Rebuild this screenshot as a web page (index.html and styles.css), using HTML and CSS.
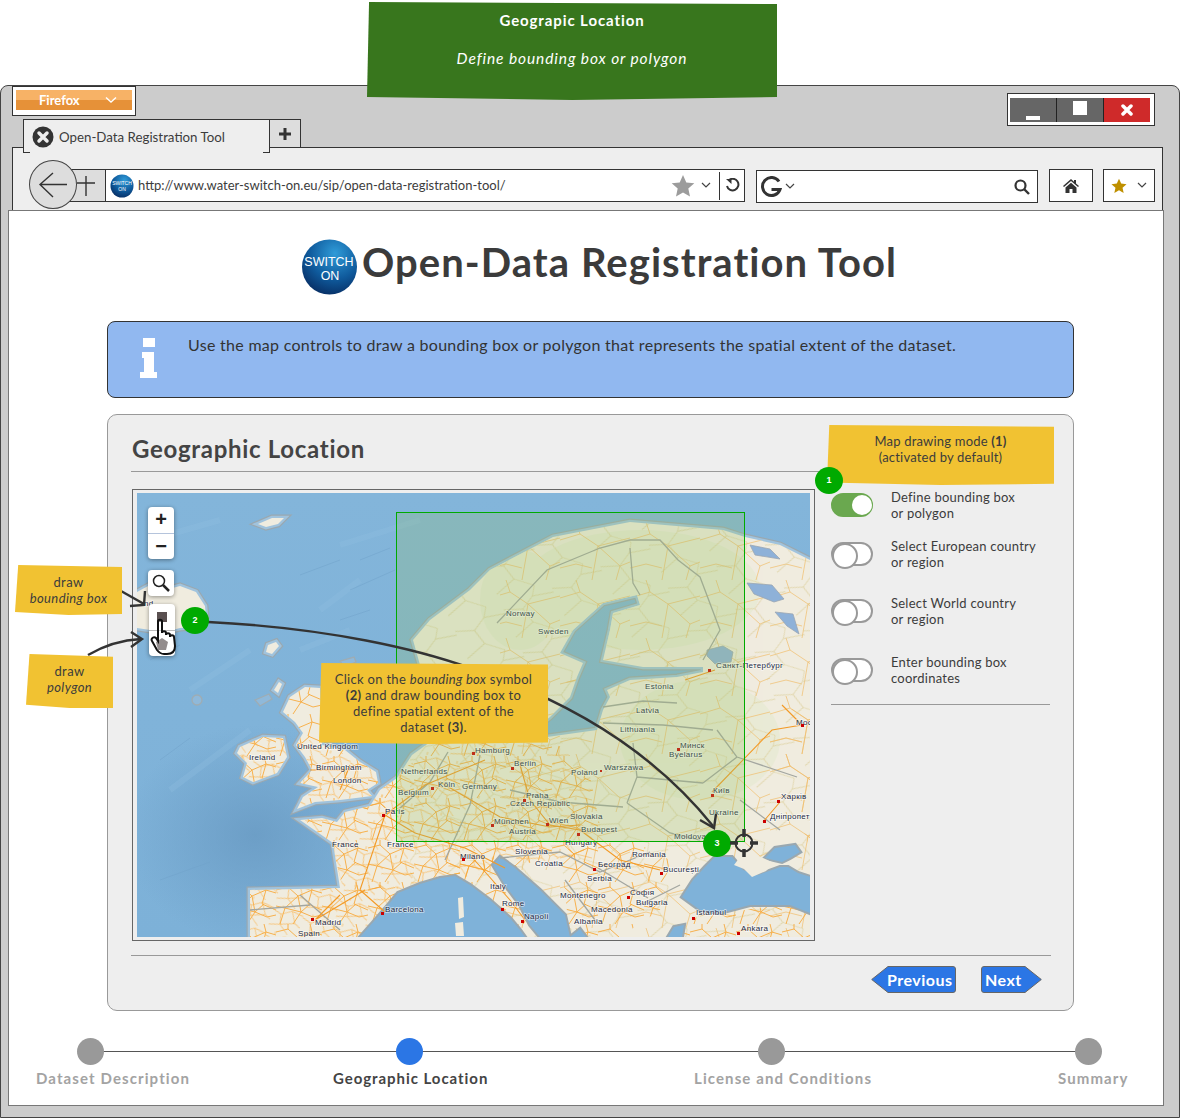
FILE: index.html
```html
<!DOCTYPE html>
<html lang="en">
<head>
<meta charset="utf-8">
<title>Open-Data Registration Tool</title>
<link rel="stylesheet" href="styles.css">
</head>
<body>
<div class="canvas">
  <div class="window">
    <div class="top-row">
      <div class="top-left">
        <div class="ff-box"><div class="ff-btn"><span>Firefox</span><svg class="ff-chev" width="12" height="8" viewBox="0 0 12 8"><path d="M1 1.500 6 6l5-4.500" /></svg></div></div>
        <div class="tabs">
          <div class="tab">
            <svg width="22" height="22" viewBox="0 0 22 22"><circle cx="11" cy="11" r="10.500" fill="#333"/><path d="M7 7l8 8M15 7l-8 8" stroke="#eee" stroke-width="3.500" stroke-linecap="round"/></svg>
            <span>Open-Data Registration Tool</span>
          </div>
          <div class="tab-add"><svg width="14" height="14" viewBox="0 0 14 14"><path d="M7 1v12M1 7h12" stroke="#333" stroke-width="3"/></svg></div>
        </div>
      </div>
      <div class="winctl">
        <div class="wc wc-min"><i></i></div>
        <div class="wc wc-max"><i></i></div>
        <div class="wc wc-close"><svg width="12" height="12" viewBox="0 0 12 12"><path d="M2 2l8 8M10 2l-8 8" stroke="#fff" stroke-width="3.500" stroke-linecap="round"/></svg></div>
      </div>
    </div>

    <div class="panel">
      <div class="toolbar">
        <div class="nav">
          <svg class="fwd" width="20" height="22" viewBox="0 0 20 22"><path d="M10 1v20M1 8h18" stroke="#333" stroke-width="1.400"/></svg>
          <div class="back"><svg width="30" height="26" viewBox="0 0 30 26"><path d="M2 12.500h27M15 1 2 12.500 15 25" fill="none" stroke="#333" stroke-width="1.400"/></svg></div>
        </div>
        <div class="urlbar">
          <svg class="tiny-logo" width="24" height="24" viewBox="0 0 24 24"><circle cx="12" cy="12" r="11.500" fill="url(#ball)"/><text x="12" y="11" class="tl-t">SWITCH</text><text x="12" y="17" class="tl-t">ON</text></svg>
          <span class="url">http://www.water-switch-on.eu/sip/open-data-registration-tool/</span>
          <svg class="star" width="24" height="24" viewBox="0 0 24 24"><path d="M12 1l3.300 7.400 8 .8-6 5.400 1.700 7.900L12 18.400 5 22.500l1.700-7.900-6-5.400 8-.8Z" fill="#9c9c9c"/></svg>
          <svg class="chev" width="10" height="7" viewBox="0 0 10 7"><path d="M1 1l4 4 4-4"/></svg>
          <div class="reload"><svg width="15" height="15" viewBox="0 0 15 15"><path d="M3.500 2.500A5.800 5.800 0 1 1 2 8" fill="none" stroke="#333" stroke-width="2"/><path d="M1 1h5.500v5z" fill="#333"/></svg></div>
        </div>
        <div class="search">
          <svg width="22" height="22" viewBox="0 0 22 22"><path d="M19 5.500A9 9 0 1 0 20 13.500H11.500" fill="none" stroke="#333" stroke-width="3"/></svg>
          <svg class="chev" width="10" height="7" viewBox="0 0 10 7"><path d="M1 1l4 4 4-4"/></svg>
          <svg class="loupe" width="16" height="16" viewBox="0 0 16 16"><circle cx="6.500" cy="6.500" r="5" fill="none" stroke="#333" stroke-width="2.200"/><path d="M10 10l5 5" stroke="#333" stroke-width="2.400"/></svg>
        </div>
        <div class="iconbox home"><svg width="16" height="14" viewBox="0 0 16 14"><path d="M8 0 0 7l1 1 7-6 7 6 1-1-3-2.600V1h-2v1.700ZM2.500 8.500 8 3.800l5.500 4.700V14H9.500V10h-3v4h-4Z" fill="#333"/></svg></div>
        <div class="iconbox fav"><svg width="16" height="16" viewBox="0 0 24 24"><path d="M12 1l3.300 7.400 8 .8-6 5.400 1.700 7.900L12 18.400 5 22.500l1.700-7.900-6-5.400 8-.8Z" fill="#bf9000"/></svg><svg class="chev" width="10" height="7" viewBox="0 0 10 7"><path d="M1 1l4 4 4-4"/></svg></div>
      </div>
    </div>

    <div class="page">
      <div class="title-row">
        <svg class="logo" width="58" height="58" viewBox="0 0 58 58">
          <defs><radialGradient id="ball" cx=".6" cy=".25" r=".85"><stop offset="0" stop-color="#2f9bd8"/><stop offset=".55" stop-color="#0f5a9c"/><stop offset="1" stop-color="#06265a"/></radialGradient></defs>
          <circle cx="28.500" cy="29" r="27.500" fill="url(#ball)"/>
          <text x="28" y="28" class="logo-t">SWITCH</text><text x="29" y="42" class="logo-t">ON</text>
        </svg>
        <h1>Open-Data Registration Tool</h1>
      </div>

      <div class="alert">
        <svg class="alert-i" width="18" height="40" viewBox="0 0 18 40"><path d="M3 0h12v9H3ZM2 14h12v20h3v6H0v-6h4v-14H2Z" fill="#fff"/></svg>
        <p>Use the map controls to draw a bounding box or polygon that represents the spatial extent of the dataset.</p>
      </div>

      <section class="card">
        <div class="card-main">
          <div class="col-left">
            <h2>Geographic Location</h2>
            <div class="map-frame">
              <svg class="map" width="673" height="444" viewBox="137 493 673 444">
                <defs>
                  <linearGradient id="sea" x1="0" y1="0" x2="0" y2="1"><stop offset="0" stop-color="#83b5da"/><stop offset="1" stop-color="#7db1d8"/></linearGradient>
                  <radialGradient id="deep"><stop offset="0" stop-color="#6596bf" stop-opacity=".7"/><stop offset="1" stop-color="#6596bf" stop-opacity="0"/></radialGradient>
                  <pattern id="dense" width="46" height="42" patternUnits="userSpaceOnUse"><path d="M0 8 12 5l10 9 14-6 10 3M4 42 9 26 22 14l3 16-8 12M36 8l-4 14 14 6M0 24l9 2 16 4 9-8M25 30l12 5 9-2M34 0l2 8M12 0l0 5" fill="none" stroke="#f7a93c" stroke-width=".9"/></pattern>
                  <pattern id="dense2" width="31" height="27" patternUnits="userSpaceOnUse" patternTransform="rotate(17)"><path d="M0 6 9 9l10-6 12 2M9 9l2 10 10 8M11 19 0 22M11 19l14-5 6 3M19 3l6 11M9 0v3" fill="none" stroke="#f9b655" stroke-width=".7"/></pattern>
                  <pattern id="sparse" width="70" height="58" patternUnits="userSpaceOnUse"><path d="M0 18 20 12l18 12 32-8M20 12 16 0M38 24l-6 34M38 24l22 20 10-4M0 46l16-4 16 4M60 44l-4 14" fill="none" stroke="#f0bd6a" stroke-width=".7"/></pattern>
                  <pattern id="sparse2" width="53" height="47" patternUnits="userSpaceOnUse" patternTransform="rotate(-24)"><path d="M0 10 18 17l14-8 21 5M18 17l4 16 16 14M22 33 0 40M38 0l-6 9" fill="none" stroke="#d9c98f" stroke-width=".6"/></pattern>
                  <path id="iceland" d="M137 592 150 585l15 5 15-4 16 6 9 14 1 11-11 10-15 1-15 4-15-2-13-2Z"/>
                  <path id="ireland" d="M240 747l23-10 20 1 4 19-10 16-24 9-10-5 4-14-10-10Z"/>
                  <path id="britain" d="M283 712l7-15 15-10 15 1 2 57 23 5 15 12 16 10 2 11-11 7 5 6-32 4-25 2-18 7 6-12 15-10-18-4 12-13-7-13-9-12 7-12-8-11Z"/>
                  <path id="main" d="M300 820 322 818 337 822 345 812 370 806 380 790 397 778 412 755 430 742 470 742 547 737 597 730 603 710 610 697 607 690 630 680 677 677 703 672 703 667 643 667 603 660 610 630 613 613 640 605 637 595 603 603 573 630 560 653 583 663 577 677 570 697 550 717 540 725 500 700 450 690 420 665 413 640 430 620 470 590 490 570 553 537 630 522 723 530 745 537 780 545 810 560V937H250V890L340 888 333 843Z"/>
                  <path id="skerry" d="M258 524l14-6 12 0-6 6-12 3Z"/>
                  <path id="faroe" d="M268 645l8-3 3 4-7 8-6-2Z"/>
                  <path id="hebrid" d="M274 690l5-8 3 2-4 9Z"/>
                  <clipPath id="landclip"><use href="#iceland"/><use href="#ireland"/><use href="#britain"/><use href="#main"/></clipPath>
                  <g id="land-shapes">
                    <use href="#iceland"/><use href="#ireland"/><use href="#britain"/><use href="#main"/><use href="#skerry"/><use href="#faroe"/><use href="#hebrid"/>
                  </g>
                  <g id="sea-shapes">
                    <path d="M360 937l15-17 13-15 10-12 22-9 20-6 15-2 15 9 20 15 20 18 10 12 5 7Z"/>
                    <path d="M500 857l15 11 25 22 25 25 5 22h-30l-10-12-10-20-15-20-12-20Z"/>
                    <path d="M570 937l10-8 6 8Z"/>
                    <path d="M682 897l11-17 12-13 10-10h17l11 13 15 5 22-8 8 0 10 6 22 7v37l-30-12h-40l-30 8-20-3Z"/>
                    <path d="M765 858l10-10 20-3 5 7-10 6-8 4Z"/>
                    <path d="M668 937l6-10 10-2-2 12Z"/>
                  </g>
                </defs>
                <rect x="137" y="493" width="673" height="444" fill="url(#sea)"/>
                <ellipse cx="255" cy="835" rx="130" ry="110" fill="url(#deep)"/>
                <path d="M150 540l70-20M340 545l80-25M320 610l40-30M170 790l80-60M300 650l50-20M190 690l60-40" class="ridge"/>
                <path d="M360 560l30-12M350 590l45-20M340 620l30-10M300 575l40-15M160 760l30-22M160 880l50-18M150 660l30-15" class="ridge-thin"/>
                <circle cx="197" cy="700" r="5" class="islet"/>
                <path d="M255 700l14-6 3 5-12 7Z" class="islet"/>
                <path d="M340 661l14-4 2 5-12 5Z" class="islet"/>
                <use href="#land-shapes" class="coast"/>
                <use href="#land-shapes" class="coast-in"/>
                <use href="#land-shapes" class="landfill"/>
                <g clip-path="url(#landclip)">
                  <g class="wash">
                    <ellipse cx="640" cy="590" rx="120" ry="60"/>
                    <ellipse cx="700" cy="740" rx="80" ry="60"/>
                    <ellipse cx="520" cy="600" rx="40" ry="50"/>
                  </g>
                  <rect x="500" y="520" width="310" height="420" fill="url(#sparse)"/>
                  <rect x="410" y="520" width="400" height="420" fill="url(#sparse2)"/>
                  <path d="M300 815l40-10 28-6 28-24 44-34 60 0 60 5 30 30 10 50-20 30-60 8-40 10-40 8-40 7h-57l-10-40Z" fill="url(#dense)"/>
                  <path d="M300 815l40-10 28-6 28-24 44-34 60 0 60 5 30 30 10 50-20 30-60 8-40 10-40 8-40 7h-57l-10-40Z" fill="url(#dense2)"/>
                  <rect x="245" y="885" width="150" height="52" fill="url(#dense)"/>
                  <rect x="245" y="885" width="150" height="52" fill="url(#dense2)"/>
                  <rect x="230" y="680" width="155" height="130" fill="url(#dense)"/>
                  <rect x="230" y="740" width="155" height="70" fill="url(#dense2)"/>
                  <path d="M450 860l60-5 40 70-30 12-30-20-40-35Z" fill="url(#dense)"/>
                  <path d="M560 850l70-10 40 20-10 50-40 27h-50Z" fill="url(#dense)"/>
                  <path d="M680 920l130-20v37H670Z" fill="url(#dense)"/>
                  <path d="M560 660l45-5-5 20-30 20ZM810 700l-20 10-30 30 30 50 20 60Z" fill="url(#sparse)"/>
                </g>
                <use href="#sea-shapes" class="sea-coast"/>
                <use href="#sea-shapes" class="sea-fill"/>
                <path d="M740 857l12-4 22 10-8 8-14 6-8-8-10-4Z" class="landfill"/>
                <path d="M458 898l5-1 1 20-5 2ZM455 923l8-1 1 14-8 0Z" class="landfill"/>
                <path d="M707 650l16-4 10 6-2 10-16 2-8-8ZM747 583l25 2 12 14-10 3-20-8ZM775 612l18 2 6 20-12-8ZM750 545l20 4 10 10-25-4Z" class="lake"/>
                <path d="M497 623l50-53 53-22 30-8 30 0 18 20 22 17 20 53-17 30M630 548l3 35 7 12M603 707l40-6 34 2M603 723l60 2 50 5M717 730l20 27-34 26M637 777l66 6M633 743l4 34-10 26M510 790l50 12 63 5M627 803l43 30 30 7M448 752l-18 30-30 26M480 755l-10 50-25 55M500 858l60-6 40 20 50-20M598 868l50 30M565 880l30 40M640 905l40-20M300 895l40 35M250 910l60-5M740 800l40 30M737 757l60 20" class="border"/>
                <path d="M385 815l30 18 50 15 40 20M385 815l40-30 60-25M385 815l-15 45-10 30M440 782l60 35 50 10 30-2M520 765l10 35 20 25 30 5M580 830l40 30 40 10M360 890l25 22M315 920l25-25M315 920l50-30M310 770l40 0M340 790l10-25M715 670l-30 10M802 725l-30 5-60 62M802 725l-20-20M780 802l-17 20M470 855l40 45 15 20" class="road"/>
                <g class="labels">
                  <text x="144" y="606">nd</text>
                  <text x="506" y="616">Norway</text><text x="538" y="634">Sweden</text>
                  <text x="716" y="668">Санкт-Петербург</text>
                  <text x="645" y="689">Estonia</text><text x="636" y="713">Latvia</text><text x="620" y="732">Lithuania</text>
                  <text x="680" y="748">Минск</text><text x="669" y="757">Byelarus</text>
                  <text x="475" y="753">Hamburg</text><text x="514" y="766">Berlin</text>
                  <text x="571" y="775">Poland</text><text x="604" y="770">Warszawa</text>
                  <text x="713" y="793">Київ</text><text x="781" y="799">Харків</text><text x="770" y="819">Дніпропетровськ</text>
                  <text x="709" y="815">Ukraine</text><text x="674" y="839">Moldova</text><text x="796" y="725">Москва</text>
                  <text x="401" y="774">Netherlands</text><text x="438" y="787">Köln</text><text x="398" y="795">Belgium</text><text x="462" y="789">Germany</text>
                  <text x="526" y="798">Praha</text><text x="510" y="806">Czech Republic</text><text x="494" y="824">München</text>
                  <text x="509" y="834">Austria</text><text x="549" y="823">Wien</text><text x="570" y="819">Slovakia</text>
                  <text x="581" y="832">Budapest</text><text x="565" y="845">Hungary</text><text x="515" y="854">Slovenia</text>
                  <text x="535" y="866">Croatia</text><text x="632" y="857">Romania</text><text x="663" y="872">București</text>
                  <text x="598" y="867">Београд</text><text x="587" y="881">Serbia</text><text x="560" y="898">Montenegro</text>
                  <text x="630" y="895">Софія</text><text x="636" y="905">Bulgaria</text><text x="490" y="889">Italy</text>
                  <text x="502" y="906">Rome</text><text x="524" y="919">Napoli</text><text x="591" y="912">Macedonia</text>
                  <text x="574" y="924">Albania</text><text x="696" y="915">Istanbul</text><text x="741" y="931">Ankara</text>
                  <text x="297" y="749">United Kingdom</text><text x="249" y="760">Ireland</text><text x="316" y="770">Birmingham</text>
                  <text x="333" y="783">London</text><text x="385" y="814">Paris</text><text x="332" y="847">France</text><text x="387" y="847">France</text>
                  <text x="385" y="912">Barcelona</text><text x="315" y="925">Madrid</text><text x="298" y="936">Spain</text><text x="460" y="859">Milano</text>
                </g>
                <g class="cities">
                  <rect x="382" y="814" width="3" height="3"/><rect x="381" y="912" width="3" height="3"/><rect x="311" y="918" width="3" height="3"/>
                  <rect x="431" y="787" width="3" height="3"/><rect x="801" y="724" width="3" height="3"/><rect x="708" y="669" width="3" height="3"/><rect x="677" y="748" width="3" height="3"/>
                  <rect x="511" y="767" width="3" height="3"/><rect x="600" y="770" width="2" height="2"/><rect x="711" y="794" width="3" height="3"/>
                  <rect x="777" y="800" width="3" height="3"/><rect x="763" y="820" width="3" height="3"/><rect x="523" y="799" width="3" height="3"/><rect x="546" y="823" width="3" height="3"/>
                  <rect x="577" y="833" width="3" height="3"/><rect x="660" y="872" width="3" height="3"/><rect x="593" y="868" width="3" height="3"/><rect x="627" y="896" width="3" height="3"/>
                  <rect x="521" y="920" width="3" height="3"/><rect x="692" y="917" width="3" height="3"/><rect x="737" y="932" width="3" height="3"/><rect x="472" y="752" width="3" height="3"/><rect x="491" y="824" width="3" height="3"/>
                  <rect x="462" y="858" width="3" height="3"/><rect x="501" y="908" width="3" height="3"/>
                </g>
                <rect x="396.500" y="512.500" width="348" height="329" class="bbox"/>
              </svg>
              <div class="ctl ctl-zoom"><b>+</b><b>−</b></div>
              <div class="ctl ctl-search"><svg width="20" height="20" viewBox="0 0 20 20"><circle cx="8" cy="8" r="5.500" fill="none" stroke="#222" stroke-width="1.500"/><path d="M12 12l6 6" stroke="#222" stroke-width="2.500"/></svg></div>
              <div class="ctl ctl-draw">
                <div class="ctl-cell"><i class="sq"></i></div>
                <div class="ctl-cell"><svg width="12" height="12" viewBox="0 0 12 12"><path d="M6 0l6 4-2 8H2L0 4Z" fill="#5a5050"/></svg></div>
              </div>
            </div>
          </div>
          <aside class="col-right">
            <div class="sticky sticky-mode">Map drawing mode <b>(1)</b><br>(activated by default)</div>
            <ul class="toggles">
              <li class="t1"><span class="sw on"></span><span>Define bounding box<br>or polygon</span></li>
              <li class="t2"><span class="sw"></span><span>Select European country<br>or region</span></li>
              <li class="t3"><span class="sw"></span><span>Select World country<br>or region</span></li>
              <li class="t4"><span class="sw"></span><span>Enter bounding box<br>coordinates</span></li>
            </ul>
          </aside>
        </div>
        <div class="card-foot">
          <a class="btn btn-prev"><svg width="85" height="27" viewBox="0 0 85 27"><path d="M17 .5H82a2.500 2.500 0 0 1 2.500 2.500v21a2.500 2.500 0 0 1-2.500 2.500H17L.7 13.500Z" fill="#2b76e5" stroke="#666"/></svg><span>Previous</span></a>
          <a class="btn btn-next"><svg width="61" height="27" viewBox="0 0 61 27"><path d="M44 .5H3A2.500 2.500 0 0 0 .5 3v21A2.500 2.500 0 0 0 3 26.500H44l16.300-13Z" fill="#2b76e5" stroke="#666"/></svg><span>Next</span></a>
        </div>
      </section>

      <div class="stepper">
        <div class="dots"><i></i><i class="cur"></i><i></i><i></i></div>
        <div class="labels-row"><span>Dataset Description</span><span class="cur">Geographic Location</span><span>License and Conditions</span><span>Summary</span></div>
      </div>
    </div>
  </div>

  <svg class="overlay" width="1180" height="1118" viewBox="0 0 1180 1118">
    <path d="M208 622C330 628 420 650 470 668 580 704 660 760 713 826" class="arrow"/>
    <path d="M700 820l14 8 2-14" class="arrow"/>
    <path d="M121 591 144 604" class="arrow"/>
    <path d="M130 606l14-1 1-14" class="arrow"/>
    <path d="M88 655C105 645 122 640 141 639" class="arrow"/>
    <path d="M131 632l11 7-11 8" class="arrow"/>
  </svg>

  <div class="banner"><b>Geograpic Location</b><em>Define bounding box or polygon</em></div>
  <div class="sticky sticky-a"><span>draw</span><em>bounding box</em></div>
  <div class="sticky sticky-b"><span>draw</span><em>polygon</em></div>
  <div class="sticky sticky-c">Click on the <em>bounding box</em> symbol<br><b>(2)</b> and draw bounding box to<br>define spatial extent of the<br>dataset <b>(3)</b>.</div>
  <div class="badge b1">1</div>
  <div class="badge b2">2</div>
  <div class="badge b3">3</div>
  <svg class="crosshair" width="28" height="28" viewBox="0 0 28 28"><circle cx="14" cy="14" r="8.500" fill="none" stroke="#333" stroke-width="2"/><path d="M14 0v8M14 20v8M0 14h8M20 14h8" stroke="#333" stroke-width="3.500"/></svg>
  <svg class="hand" width="30" height="38" viewBox="0 0 30 38"><path d="M8 3.500C8 1 12 1 12 3.500V15c0-2.500 4-2.500 4 0v2c0-2.500 4-2.500 4 0v2c0-2.500 4-2.500 4 0l1 9c0 5-3 8-8 8h-3c-3 0-5-1.500-7-4L2 23c-1.500-2.500 2-5 4-3l2 3Z" fill="#fff" fill-opacity=".35" stroke="#111" stroke-width="2"/></svg>
</div>
</body>
</html>
```
FILE: styles.css
```css
* { box-sizing: border-box; }
html, body { margin: 0; padding: 0; background: #fff; }
body { font-family: Lato, "Open Sans", sans-serif; color: #3c3c3c; }
.canvas { position: relative; width: 1180px; height: 1118px; overflow: hidden; }

/* window */
.window { position: absolute; left: 0; top: 85px; width: 1180px; height: 1033px; background: #ccc; border: 1.500px solid #444; border-radius: 8px 8px 0 0; }
.top-row { display: flex; justify-content: space-between; height: 61px; padding: 0 24px 0 11px; }
.ff-box { width: 124px; height: 30px; background: #fff; border: 1px solid #333; padding: 3px 3px; }
.ff-btn { height: 20px; background: linear-gradient(#f7b266 50%, #e69138 50%); color: #fff; display: flex; align-items: center; justify-content: space-between; padding: 0 15px 0 23px; font-size: 13px; font-weight: 700; }
.ff-chev { fill: none; stroke: #fff; stroke-width: 1.500; }
.tabs { display: flex; margin-left: 11px; margin-top: 3px; height: 28px; position: relative; z-index: 2; }
.tab { width: 247px; height: 34px; background: #eee; border: 1px solid #333; border-bottom: 0; display: flex; align-items: center; gap: 5px; padding: 0 0 0 8px; font-size: 13.300px; position: relative; }
.tab::before, .tab::after { content: ""; position: absolute; bottom: 0; width: 7px; height: 1px; background: #333; }
.tab::before { left: -1px; }
.tab::after { right: -1px; }
.tab-add { width: 32px; height: 28px; margin-left: -1px; background: #ddd; border: 1px solid #333; border-bottom: 0; display: flex; align-items: center; justify-content: center; }
.winctl { display: flex; width: 148px; height: 33px; margin-top: 7px; background: #fff; border: 1px solid #333; padding: 4px 4px 3px 2px; }
.wc { flex: 1; display: flex; align-items: center; justify-content: center; background: #666; }
.wc + .wc { border-left: 1px solid #222; }
.wc-min i { width: 14px; height: 4px; background: #fff; margin-top: 15px; }
.wc-max i { width: 14px; height: 14px; background: #fff; margin-top: -5px; }
.wc-close { background: #cf2a2a; }

.panel { width: 1151px; height: 70px; margin-left: 11px; background: #eee; border: 1px solid #333; padding-top: 21px; }
.toolbar { display: flex; height: 33px; padding-left: 47px; }
.nav { width: 45px; height: 33px; background: #ddd; border: 1px solid #333; border-left: 0; border-right: 0; position: relative; display: flex; align-items: center; justify-content: flex-end; padding-right: 9px; }
.back { position: absolute; left: -31px; top: -10px; width: 48px; height: 49px; border-radius: 50%; background: #ddd; border: 1px solid #444; display: flex; align-items: center; justify-content: center; z-index: 2; }
.urlbar { width: 640px; background: #fff; border: 1px solid #333; display: flex; align-items: center; padding-left: 4px; }
.tiny-logo { flex: none; }
.tl-t { font-size: 5px; fill: #fff; text-anchor: middle; font-family: "Liberation Sans", sans-serif; }
.url { flex: 1; margin: -2px 0 0 4px; font-size: 13px; white-space: nowrap; }
.star { margin-right: 6px; }
.chev { fill: none; stroke: #444; stroke-width: 1.200; flex: none; }
.reload { width: 25px; height: 28px; margin-left: 8px; border-left: 1px solid #333; display: flex; align-items: center; justify-content: center; }
.search { width: 282px; height: 33px; margin: 1px 0 0 11px; background: #fff; border: 1px solid #333; display: flex; align-items: center; padding: 0 7px 0 3px; gap: 3px; }
.loupe { margin-left: auto; }
.iconbox { height: 33px; background: #fff; border: 1px solid #333; display: flex; align-items: center; justify-content: center; }
.home { width: 44px; margin-left: 11px; }
.fav { width: 52px; margin-left: 10px; gap: 10px; }

/* page */
.page { position: absolute; left: 7px; top: 124px; width: 1156px; height: 896px; background: #fff; border: 1px solid #777; z-index: 1; }
.title-row { height: 110px; display: flex; align-items: flex-start; padding: 27px 0 0 292px; gap: 3px; }
.logo { flex: none; }
.logo-t { font: 12.500px "Liberation Sans", sans-serif; fill: #fff; text-anchor: middle; }
h1 { margin: -1px 0 0; font-size: 40px; line-height: 50px; font-weight: 700; color: #3b3b3b; letter-spacing: 1.050px; white-space: nowrap; }
.alert { width: 967px; height: 77px; margin-left: 98px; background: #91b8f0; border: 1px solid #333; border-radius: 8px; display: flex; padding: 16px 0 0 32px; }
.alert-i { flex: none; }
.alert p { margin: -3px 0 0 30px; font-size: 16px; line-height: 20px; letter-spacing: .29px; color: #333; }

.card { width: 967px; height: 597px; margin: 16px 0 0 98px; background: #eee; border: 1px solid #999; border-radius: 10px; padding: 0 0 0 23px; }
.card-main { display: flex; height: 540px; }
.col-left { width: 696px; flex: none; }
h2 { margin: 0 0 17px; height: 57px; padding: 18px 0 0 1px; font-size: 24px; line-height: 32px; font-weight: 700; color: #444; letter-spacing: .7px; border-bottom: 1px solid #999; }
.map-frame { position: relative; width: 683px; height: 452px; margin-left: 1px; border: 1px solid #666; padding: 3px 4px; background: #eee; }
.map { display: block; }
.ridge { fill: none; stroke: #93c0e0; stroke-width: 6; opacity: .3; }
.ridge-thin { fill: none; stroke: #6fa2ca; stroke-width: 1; opacity: .5; }
.islet { fill: #8fb9da; stroke: #9eacb3; stroke-width: 1.300; }
.coast { fill: none; stroke: #9aa8b0; stroke-width: 7; }
.coast-in { fill: none; stroke: #a0c3dd; stroke-width: 4.600; }
.landfill { fill: #f0ecdf; }
.wash { fill: #e3e9cd; opacity: .55; }
.sea-coast { fill: none; stroke: #9aa8b0; stroke-width: 4; }
.sea-fill { fill: #7fb2d9; }
.lake { fill: #8eb1d8; stroke: #9aa6b2; stroke-width: .8; }
.border { fill: none; stroke: #a3a6a0; stroke-width: 1.300; }
.road { fill: none; stroke: #f39a26; stroke-width: 1.100; }
.labels text { font: 8px "Liberation Sans", sans-serif; fill: #1c2a44; stroke: #fff; stroke-width: 1.500px; stroke-opacity: .6; paint-order: stroke; letter-spacing: .3px; }
.cities rect { fill: #c00; }
.bbox { fill: rgb(150, 190, 100); fill-opacity: .25; stroke: #0a0; stroke-width: 1; }
.ctl { position: absolute; background: #fff; border-radius: 4px; box-shadow: 0 1px 4px rgba(0, 0, 0, .4); }
.ctl-zoom { left: 15px; top: 17px; width: 26px; height: 52px; display: flex; flex-direction: column; }
.ctl-zoom b { flex: 1; display: flex; align-items: center; justify-content: center; font: 700 20px "Liberation Sans", sans-serif; color: #222; }
.ctl-zoom b + b { border-top: 1px solid #b5c4dc; }
.ctl-search { left: 15px; top: 80px; width: 26px; height: 26px; display: flex; align-items: center; justify-content: center; }
.ctl-draw { left: 16px; top: 114px; width: 26px; height: 52px; }
.ctl-cell { height: 26px; display: flex; align-items: center; justify-content: center; }
.ctl-cell + .ctl-cell { border-top: 1px solid #bbb; }
.sq { width: 10px; height: 10px; background: #5a5050; }

.col-right { width: 228px; flex: none; padding-top: 10px; }
.sticky { background: #f1c232; color: #3c3c3c; text-align: center; }
.sticky-mode { width: 227px; height: 60px; padding-top: 8px; font-size: 13px; line-height: 16px; letter-spacing: .2px; clip-path: polygon(1% 0, 100% 3%, 100% 98%, 50% 100%, 0 96%); }
.toggles { list-style: none; margin: 4px 0 0; padding: 0 0 0 4px; font-size: 13px; line-height: 16px; letter-spacing: .24px; width: 223px; }
.toggles::after { content: ""; display: block; height: 1px; background: #999; }
.toggles li { display: flex; align-items: center; gap: 18px; height: 32px; }
.toggles .t2 { margin-top: 17px; }
.toggles .t3 { margin-top: 25px; }
.toggles .t4 { margin-top: 27px; margin-bottom: 18px; }
.sw { width: 42px; height: 24px; border-radius: 12px; background: #fff; border: 2px solid #999; position: relative; flex: none; }
.sw::after { content: ""; position: absolute; left: -1px; top: -1px; width: 22px; height: 22px; border-radius: 50%; background: #fff; border: 2px solid #999; }
.sw.on { background: #6aa84f; border-color: #6aa84f; }
.sw.on::after { left: auto; right: -1px; border: 0; top: 0; width: 20px; height: 20px; }

.card-foot { border-top: 1px solid #999; width: 920px; height: 55px; padding: 10px 9px 0 0; display: flex; justify-content: flex-end; gap: 25px; }
.btn { position: relative; height: 27px; display: flex; align-items: center; color: #fff; font-size: 16px; font-weight: 700; letter-spacing: .5px; }
.btn svg { position: absolute; left: 0; top: 0; }
.btn span { position: relative; }
.btn-prev { width: 85px; padding-left: 16px; }
.btn-next { width: 61px; padding-left: 4px; }

.stepper { position: relative; }
.dots { display: grid; grid-template-columns: 319px 362px 317px 27px; margin: 27px 0 0 68px; width: 1025px; position: relative; }
.dots::before { content: ""; position: absolute; left: 13px; right: 13px; top: 13px; height: 1px; background: #555; }
.dots i { width: 27px; height: 27px; border-radius: 50%; background: #999; position: relative; }
.dots i.cur { background: #2b76e5; }
.labels-row { display: grid; grid-template-columns: 297px 361px 364px auto; margin: 3px 0 0 27px; font-size: 15px; line-height: 20px; font-weight: 700; letter-spacing: 1.100px; color: #a3a3a3; white-space: nowrap; }
.labels-row .cur { color: #444; letter-spacing: .95px; }

/* annotations lying over the page */
.overlay { position: absolute; left: 0; top: 0; z-index: 2; pointer-events: none; }
.arrow { fill: none; stroke: #333; stroke-width: 2.400; }
.banner { position: absolute; left: 367px; top: 2px; width: 410px; height: 98px; z-index: 3; background: #38761d; color: #fff; font-size: 15px; letter-spacing: .9px; text-align: center; padding-top: 8px; clip-path: polygon(.5% 0, 100% 2%, 100% 97%, 50% 100%, 0 97%); }
.banner b, .banner em { display: block; line-height: 20px; }
.banner em { margin-top: 18px; font-size: 15.500px; }
.sticky-a, .sticky-b, .sticky-c { position: absolute; z-index: 3; font-size: 13px; line-height: 16px; }
.sticky-a span, .sticky-a em, .sticky-b span, .sticky-b em { display: block; }
.sticky-a { left: 15px; top: 565px; width: 107px; height: 50px; padding-top: 9px; letter-spacing: .4px; clip-path: polygon(3% 0, 100% 4%, 100% 98%, 50% 100%, 0 94%); }
.sticky-b { left: 26px; top: 654px; width: 87px; height: 54px; padding-top: 9px; letter-spacing: .4px; clip-path: polygon(4% 0, 100% 5%, 100% 100%, 50% 100%, 0 94%); }
.sticky-c { left: 319px; top: 663px; width: 229px; height: 81px; padding: 8px 0 0; letter-spacing: .3px; clip-path: polygon(1% 0, 100% 2%, 100% 98%, 50% 100%, 0 98%); }
.badge { position: absolute; z-index: 4; width: 28px; height: 27px; border-radius: 50%; background: #0a0; color: #fff; font: 700 9px/27px "Liberation Sans", sans-serif; text-align: center; }
.b1 { left: 815px; top: 467px; }
.b2 { left: 181px; top: 607px; }
.b3 { left: 703px; top: 830px; }
.crosshair { position: absolute; left: 730px; top: 829px; z-index: 4; }
.hand { position: absolute; left: 150px; top: 618px; z-index: 4; }
```
